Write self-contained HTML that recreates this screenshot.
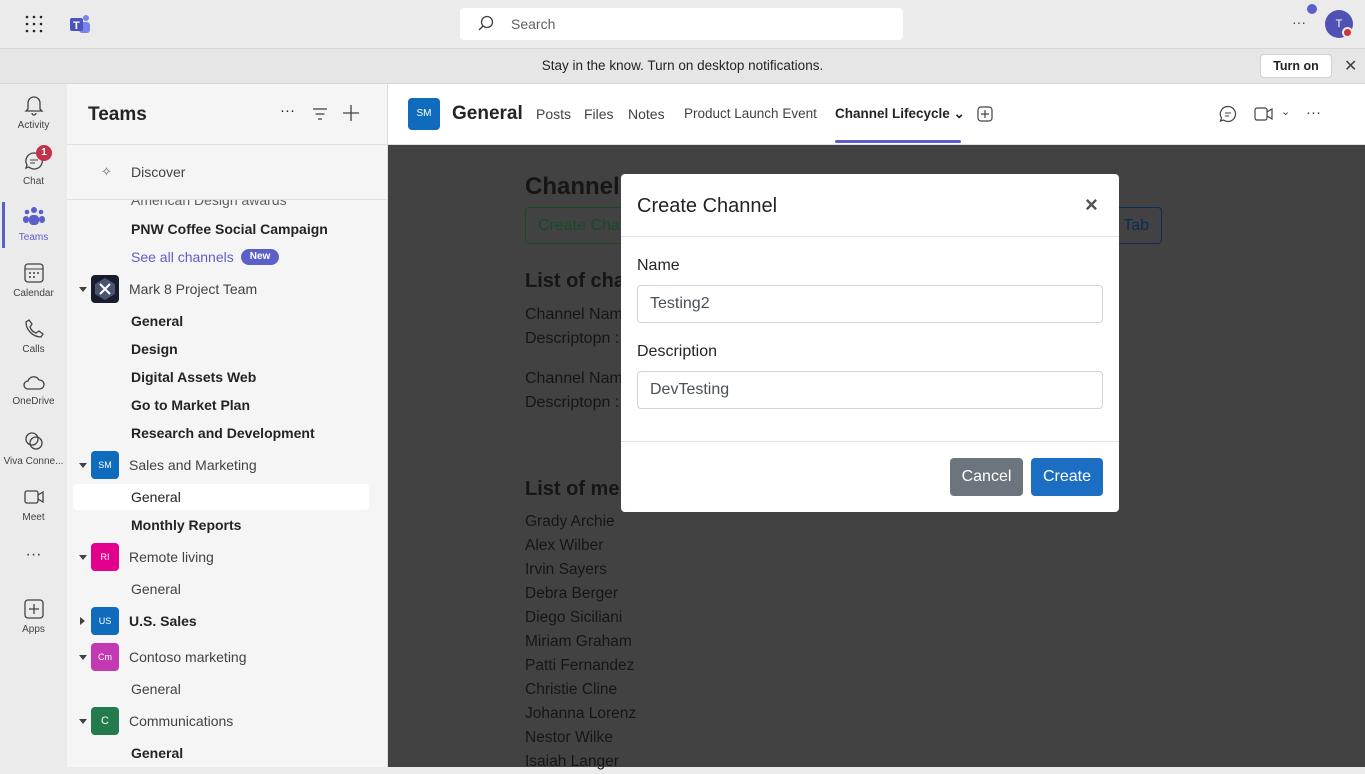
<!DOCTYPE html>
<html><head><meta charset="utf-8"><style>
*{box-sizing:border-box;margin:0;padding:0}
body{width:1365px;height:767px;overflow:hidden;font-family:"Liberation Sans",sans-serif;background:#ebebeb;position:relative;color:#242424}
.abs{position:absolute}
.top{left:0;top:0;width:1365px;height:48px;background:#ebebeb}
.search{left:460px;top:8px;width:443px;height:32px;background:#fff;border-radius:4px;font-size:14px;color:#616161;padding:8px 0 0 51px}
.notif{left:0;top:48px;width:1365px;height:36px;background:#e6e6e6;border-top:1px solid #d6d6d6;border-bottom:1px solid #d6d6d6;font-size:13.5px;text-align:center;line-height:34px;color:#242424}
.turn{left:1260px;top:54px;width:72px;height:24px;background:#fff;border:1px solid #d1d1d1;border-radius:4px;font-size:12.5px;line-height:22px;text-align:center;font-weight:bold}
.rail{left:0;top:84px;width:67px;height:683px;background:#ebebeb}
.ri{position:absolute;left:0;width:67px;text-align:center;font-size:10px;color:#424242}
.ri svg{display:block;margin:0 auto 4px}
.panel{left:67px;top:84px;width:321px;height:683px;background:#f5f5f5;border-right:1px solid #e0e0e0}
.it{position:absolute;left:131px;font-size:14px;color:#242424}
.b{font-weight:bold}
.tm{position:absolute;left:91px;width:28px;height:28px;border-radius:4px;color:#fff;font-size:9px;text-align:center;line-height:28px}
.tl{position:absolute;left:129px;font-size:14px;color:#424242}
.car{position:absolute;left:79px;width:0;height:0;border-left:4px solid transparent;border-right:4px solid transparent;border-top:5px solid #424242}
.hdr{left:388px;top:84px;width:977px;height:61px;background:#fff;border-bottom:1px solid #e0e0e0}
.tab{position:absolute;top:22px;font-size:14px;color:#424242}
.main{left:388px;top:145px;width:977px;height:622px;background:#424242;color:#161616;font-size:16px}
.modal{left:621px;top:174px;width:498px;height:338px;background:#fff;border-radius:4px}
.inp{position:absolute;left:16px;width:466px;height:38px;border:1px solid #ced4da;border-radius:4px;font-size:16px;color:#495057;padding:9px 12px}
</style></head><body>
<div class="abs top"></div>
<svg class="abs" style="left:25px;top:15px" width="18" height="18"><g fill="#242424"><circle cx="2" cy="2" r="1.3"/><circle cx="9" cy="2" r="1.3"/><circle cx="16" cy="2" r="1.3"/><circle cx="2" cy="9" r="1.3"/><circle cx="9" cy="9" r="1.3"/><circle cx="16" cy="9" r="1.3"/><circle cx="2" cy="16" r="1.3"/><circle cx="9" cy="16" r="1.3"/><circle cx="16" cy="16" r="1.3"/></g></svg>
<svg class="abs" style="left:69px;top:14px" width="22" height="20"><circle cx="17" cy="4" r="3" fill="#7b83eb"/><rect x="10" y="8" width="11" height="11" rx="3" fill="#7b83eb"/><rect x="1" y="4" width="13" height="13" rx="2" fill="#4b53bc"/><text x="4" y="15" font-size="11" font-weight="bold" fill="#fff" font-family="Liberation Sans">T</text></svg>
<div class="abs search">Search</div>
<svg class="abs" style="left:478px;top:15px" width="16" height="16"><circle cx="9" cy="7" r="5.5" fill="none" stroke="#424242" stroke-width="1.3"/><path d="M5 11L1 15" stroke="#424242" stroke-width="1.4"/></svg>
<div class="abs" style="left:1292px;top:14px;font-size:14px;color:#424242">···</div>
<div class="abs" style="left:1307px;top:4px;width:10px;height:10px;border-radius:50%;background:#5b5fc7"></div>
<div class="abs" style="left:1325px;top:10px;width:28px;height:28px;border-radius:50%;background:#4f52b2;color:#fff;font-size:11px;text-align:center;line-height:28px">T</div>
<div class="abs" style="left:1342px;top:27px;width:11px;height:11px;border-radius:50%;background:#d13438;border:2px solid #ebebeb"></div>
<div class="abs notif">Stay in the know. Turn on desktop notifications.</div>
<div class="abs turn">Turn on</div>
<div class="abs" style="left:1344px;top:56px;font-size:16px;color:#424242">✕</div>

<div class="abs rail">
<div class="ri" style="top:10px"><svg width="20" height="22"><path d="M4 15V9a6 6 0 0112 0v6l2 2H2z M8 19a2 2 0 004 0" fill="none" stroke="#424242" stroke-width="1.3"/></svg>Activity</div>
<div class="ri" style="top:66px"><svg width="22" height="22"><path d="M11 3a8 8 0 11-5 14l-3 1 1-3A8 8 0 0111 3z" fill="none" stroke="#424242" stroke-width="1.3"/><path d="M7 10h8M7 13h5" stroke="#424242"/></svg>Chat</div>
<div class="abs" style="left:36px;top:61px;width:16px;height:16px;border-radius:50%;background:#c4314b;color:#fff;font-size:10px;font-weight:bold;text-align:center;line-height:16px">1</div>
<div style="position:absolute;left:2px;top:118px;width:3px;height:46px;background:#5b5fc7"></div>
<div class="ri" style="top:122px;color:#5b5fc7"><svg width="22" height="22"><g fill="#5b5fc7"><circle cx="11" cy="4" r="3"/><circle cx="4" cy="6" r="2.3"/><circle cx="18" cy="6" r="2.3"/><rect x="6" y="9" width="10" height="10" rx="4"/><rect x="0" y="10" width="6" height="7" rx="3"/><rect x="16" y="10" width="6" height="7" rx="3"/></g></svg>Teams</div>
<div class="ri" style="top:178px"><svg width="22" height="22"><rect x="2" y="2" width="18" height="18" rx="3" fill="none" stroke="#424242" stroke-width="1.3"/><path d="M2 7h18" stroke="#424242"/><g fill="#424242"><circle cx="7" cy="11" r="1"/><circle cx="11" cy="11" r="1"/><circle cx="15" cy="11" r="1"/><circle cx="7" cy="15" r="1"/><circle cx="11" cy="15" r="1"/></g></svg>Calendar</div>
<div class="ri" style="top:234px"><svg width="22" height="22"><path d="M6 2l3 4-2 3c1 3 3 5 6 6l3-2 4 3-2 3C10 19 3 12 3 4z" fill="none" stroke="#424242" stroke-width="1.3"/></svg>Calls</div>
<div class="ri" style="top:290px"><svg width="22" height="18"><path d="M5 15a4 4 0 010-8 6 6 0 0111-1 4.5 4.5 0 011 9z" fill="none" stroke="#424242" stroke-width="1.3"/></svg>OneDrive</div>
<div class="ri" style="top:346px"><svg width="22" height="22"><circle cx="9" cy="9" r="6" fill="none" stroke="#424242" stroke-width="1.3"/><circle cx="13" cy="13" r="6" fill="none" stroke="#424242" stroke-width="1.3"/></svg>Viva Conne...</div>
<div class="ri" style="top:402px"><svg width="22" height="22"><rect x="2" y="5" width="13" height="12" rx="2" fill="none" stroke="#424242" stroke-width="1.3"/><path d="M15 9l5-3v10l-5-3" fill="none" stroke="#424242" stroke-width="1.3"/></svg>Meet</div>
<div class="ri" style="top:462px;font-size:16px">···</div>
<div class="ri" style="top:514px"><svg width="22" height="22"><rect x="2" y="2" width="18" height="18" rx="3" fill="none" stroke="#424242" stroke-width="1.3"/><path d="M11 6v10M6 11h10" stroke="#424242" stroke-width="1.3"/></svg>Apps</div>
</div>

<div class="abs panel">
<div style="position:absolute;left:21px;top:20px;font-size:19px;font-weight:bold">Teams</div>
<div style="position:absolute;left:213px;top:18px;font-size:15px">···</div>
<svg style="position:absolute;left:245px;top:24px" width="16" height="12"><path d="M1 1h14M3.5 6h9M6 11h4" stroke="#424242" stroke-width="1.2"/></svg>
<svg style="position:absolute;left:276px;top:21px" width="16" height="16"><path d="M8 0v16M0 8h16" stroke="#424242" stroke-width="1.3"/></svg>
<div style="position:absolute;left:0;top:60px;width:320px;height:1px;background:#e0e0e0"></div>
<div style="position:absolute;left:34px;top:80px;font-size:13px;color:#616161">✧</div>
<div style="position:absolute;left:64px;top:80px;font-size:14px;color:#424242">Discover</div>
<div style="position:absolute;left:0;top:115px;width:320px;height:1px;background:#e0e0e0"></div>
</div>
<div class="abs" style="left:67px;top:200px;width:320px;height:10px;overflow:hidden"><div class="it" style="left:64px;top:-8px;color:#616161">American Design awards</div></div>
<div class="it b" style="top:221px">PNW Coffee Social Campaign</div>
<div class="it" style="top:249px;color:#5b5fc7">See all channels</div>
<div class="abs" style="left:241px;top:249px;width:38px;height:16px;border-radius:8px;background:#5b5fc7;color:#fff;font-size:10px;font-weight:bold;text-align:center;line-height:16px">New</div>
<div class="car" style="top:287px"></div><div class="tm" style="top:275px;background:#1b1b2e"><svg width="28" height="28"><path d="M14 3l10 6v10l-10 6-10-6V9z" fill="#4a5470"/><path d="M9 9l10 10M19 9L9 19" stroke="#fff" stroke-width="2"/></svg></div><div class="tl" style="top:281px">Mark 8 Project Team</div>
<div class="it b" style="top:313px">General</div>
<div class="it b" style="top:341px">Design</div>
<div class="it b" style="top:369px">Digital Assets Web</div>
<div class="it b" style="top:397px">Go to Market Plan</div>
<div class="it b" style="top:425px">Research and Development</div>
<div class="car" style="top:463px"></div><div class="tm" style="top:451px;background:#0f6cbd">SM</div><div class="tl" style="top:457px">Sales and Marketing</div>
<div class="abs" style="left:73px;top:484px;width:296px;height:26px;background:#fff;border-radius:4px"></div>
<div class="it" style="top:489px">General</div>
<div class="it b" style="top:517px">Monthly Reports</div>
<div class="car" style="top:555px"></div><div class="tm" style="top:543px;background:#e3008c">RI</div><div class="tl" style="top:549px">Remote living</div>
<div class="it" style="top:581px;color:#424242">General</div>
<div class="abs" style="left:80px;top:617px;border-top:4px solid transparent;border-bottom:4px solid transparent;border-left:5px solid #424242"></div><div class="tm" style="top:607px;background:#0f6cbd">US</div><div class="tl b" style="top:613px;color:#242424">U.S. Sales</div>
<div class="car" style="top:655px"></div><div class="tm" style="top:643px;background:#c239b3">Cm</div><div class="tl" style="top:649px">Contoso marketing</div>
<div class="it" style="top:681px;color:#424242">General</div>
<div class="car" style="top:719px"></div><div class="tm" style="top:707px;background:#237b4b;font-size:11px">C</div><div class="tl" style="top:713px">Communications</div>
<div class="it b" style="top:745px">General</div>

<div class="abs hdr">
<div style="position:absolute;left:20px;top:14px;width:32px;height:32px;border-radius:4px;background:#0f6cbd;color:#fff;font-size:10px;text-align:center;line-height:32px">SM</div>
<div style="position:absolute;left:64px;top:19px;font-size:19px;font-weight:bold">General</div>
<div class="tab" style="left:148px">Posts</div>
<div class="tab" style="left:196px">Files</div>
<div class="tab" style="left:240px">Notes</div>
<div class="tab" style="left:296px;font-size:13.5px">Product Launch Event</div>
<div class="tab" style="left:447px;font-weight:bold;color:#242424;font-size:13.5px">Channel Lifecycle ⌄</div>
<div style="position:absolute;left:447px;top:56px;width:126px;height:3px;background:#5b5fc7;border-radius:2px"></div>
<svg style="position:absolute;left:589px;top:22px" width="16" height="16"><rect x="1" y="1" width="14" height="14" rx="3" fill="none" stroke="#424242" stroke-width="1.2"/><path d="M8 4v8M4 8h8" stroke="#424242" stroke-width="1.2"/></svg>
<svg style="position:absolute;left:831px;top:21px" width="18" height="18"><path d="M9 1.5a7.5 7.5 0 11-4.5 13.5L1.5 16l1-3A7.5 7.5 0 019 1.5z" fill="none" stroke="#424242" stroke-width="1.2"/><path d="M6 8h6M6 11h4" stroke="#424242"/></svg>
<svg style="position:absolute;left:866px;top:23px" width="20" height="14"><rect x="1" y="1" width="12" height="12" rx="2" fill="none" stroke="#424242" stroke-width="1.2"/><path d="M13 5l5-3v10l-5-3" fill="none" stroke="#424242" stroke-width="1.2"/></svg>
<div style="position:absolute;left:893px;top:21px;font-size:11px;color:#424242">⌄</div>
<div style="position:absolute;left:918px;top:20px;font-size:15px;color:#424242">···</div>
</div>

<div class="abs main">
<div style="position:absolute;left:137px;top:28px;font-size:24px;font-weight:bold">Channel</div>
<div style="position:absolute;left:137px;top:62px;width:150px;height:37px;border:1px solid #144d25;border-radius:4px;color:#144d25;padding:9px 12px">Create Channel</div>
<div style="position:absolute;left:700px;top:62px;width:74px;height:37px;border:1px solid #0a2c5a;border-radius:4px;color:#0a2c5a;padding:9px 12px;text-align:right">Tab</div>
<div style="position:absolute;left:137px;top:125px;font-size:20px;font-weight:bold">List of channels</div>
<div style="position:absolute;left:137px;top:158px;line-height:24px">Channel Name<br>Descriptopn :</div>
<div style="position:absolute;left:137px;top:222px;line-height:24px">Channel Name<br>Descriptopn :</div>
<div style="position:absolute;left:137px;top:333px;font-size:20px;font-weight:bold">List of members</div>
<div style="position:absolute;left:137px;top:365px;line-height:24px;font-size:15.5px">Grady Archie<br>Alex Wilber<br>Irvin Sayers<br>Debra Berger<br>Diego Siciliani<br>Miriam Graham<br>Patti Fernandez<br>Christie Cline<br>Johanna Lorenz<br>Nestor Wilke<br>Isaiah Langer</div>
</div>

<div class="abs modal">
<div style="position:absolute;left:16px;top:21px;font-size:20px;color:#212529">Create Channel</div>
<div style="position:absolute;left:464px;top:18px;font-size:22px;color:#555;font-weight:bold">×</div>
<div style="position:absolute;left:0;top:62px;width:498px;height:1px;background:#dee2e6"></div>
<div style="position:absolute;left:16px;top:83px;font-size:16px;color:#212529">Name</div>
<div class="inp" style="top:111px">Testing2</div>
<div style="position:absolute;left:16px;top:169px;font-size:16px;color:#212529">Description</div>
<div class="inp" style="top:197px">DevTesting</div>
<div style="position:absolute;left:0;top:267px;width:498px;height:1px;background:#dee2e6"></div>
<div style="position:absolute;left:329px;top:284px;width:73px;height:38px;background:#6c757d;border-radius:4px;color:#fff;font-size:16px;text-align:center;line-height:38px">Cancel</div>
<div style="position:absolute;left:410px;top:284px;width:72px;height:38px;background:#1b6ec2;border-radius:4px;color:#fff;font-size:16px;text-align:center;line-height:38px">Create</div>
</div>
</body></html>
